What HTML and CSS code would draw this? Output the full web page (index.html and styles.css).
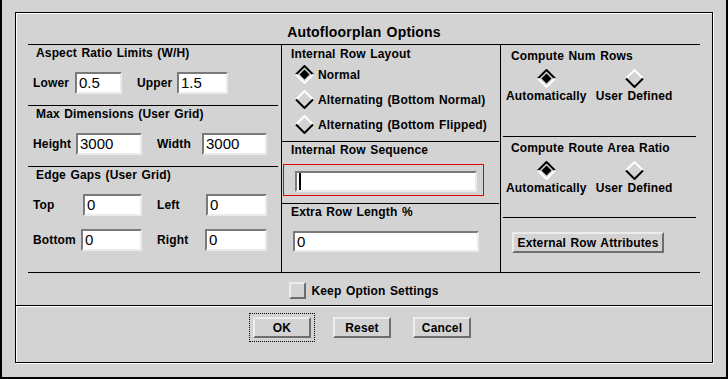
FILE: index.html
```html
<!DOCTYPE html>
<html>
<head>
<meta charset="utf-8">
<title>Autofloorplan Options</title>
<link rel="stylesheet" href="styles.css">
</head>
<body>
<div class="screen">
  <div class="frame">
    <div class="title">Autofloorplan Options</div>
    <div class="main">
      <div class="col col-left">
        <div class="sec sec-la">
          <div class="hd">Aspect Ratio Limits (W/H)</div>
          <div class="row r1">
            <span class="lbl">Lower</span><div class="field">0.5</div>
            <span class="lbl lbl2">Upper</span><div class="field">1.5</div>
          </div>
        </div>
        <div class="sec sec-lb">
          <div class="hd">Max Dimensions (User Grid)</div>
          <div class="row r2">
            <span class="lbl">Height</span><div class="field">3000</div>
            <span class="lbl lbl2">Width</span><div class="field">3000</div>
          </div>
        </div>
        <div class="sec sec-lc">
          <div class="hd">Edge Gaps (User Grid)</div>
          <div class="row r3">
            <span class="lbl">Top</span><div class="field">0</div>
            <span class="lbl lbl2">Left</span><div class="field">0</div>
          </div>
          <div class="row r4">
            <span class="lbl">Bottom</span><div class="field">0</div>
            <span class="lbl lbl2">Right</span><div class="field">0</div>
          </div>
        </div>
      </div>

      <div class="col col-mid">
        <div class="sec sec-ma">
          <div class="hd">Internal Row Layout</div>
          <div class="radios">
            <div class="radio">
              <svg class="dia" viewBox="0 0 19 19" width="19" height="19"><path d="M9.5 4.5L14.5 9.5L9.5 14.5L4.5 9.5Z" fill="#000"/><path d="M1 9.5L9.5 1L18 9.5" fill="none" stroke="#000" stroke-width="2"/><path d="M1 9.5L9.5 18L18 9.5" fill="none" stroke="#fff" stroke-width="2"/></svg>
              <span>Normal</span>
            </div>
            <div class="radio">
              <svg class="dia" viewBox="0 0 19 19" width="19" height="19"><path d="M1 9.5L9.5 1L18 9.5" fill="none" stroke="#fff" stroke-width="2"/><path d="M1 9.5L9.5 18L18 9.5" fill="none" stroke="#000" stroke-width="2"/></svg>
              <span>Alternating (Bottom Normal)</span>
            </div>
            <div class="radio">
              <svg class="dia" viewBox="0 0 19 19" width="19" height="19"><path d="M1 9.5L9.5 1L18 9.5" fill="none" stroke="#fff" stroke-width="2"/><path d="M1 9.5L9.5 18L18 9.5" fill="none" stroke="#000" stroke-width="2"/></svg>
              <span>Alternating (Bottom Flipped)</span>
            </div>
          </div>
        </div>
        <div class="sec sec-mb">
          <div class="hd">Internal Row Sequence</div>
          <div class="focusbox">
            <div class="field seq"><span class="cursor"></span></div>
          </div>
        </div>
        <div class="sec sec-mc">
          <div class="hd">Extra Row Length %</div>
          <div class="field extra">0</div>
        </div>
      </div>

      <div class="col col-right">
        <div class="sec sec-ra">
          <div class="hd">Compute Num Rows</div>
          <div class="opts">
            <div class="opt">
              <svg class="dia" viewBox="0 0 19 19" width="19" height="19"><path d="M9.5 4.5L14.5 9.5L9.5 14.5L4.5 9.5Z" fill="#000"/><path d="M1 9.5L9.5 1L18 9.5" fill="none" stroke="#000" stroke-width="2"/><path d="M1 9.5L9.5 18L18 9.5" fill="none" stroke="#fff" stroke-width="2"/></svg>
              <span>Automatically</span>
            </div>
            <div class="opt">
              <svg class="dia" viewBox="0 0 19 19" width="19" height="19"><path d="M1 9.5L9.5 1L18 9.5" fill="none" stroke="#fff" stroke-width="2"/><path d="M1 9.5L9.5 18L18 9.5" fill="none" stroke="#000" stroke-width="2"/></svg>
              <span>User Defined</span>
            </div>
          </div>
        </div>
        <div class="sec sec-rb">
          <div class="hd">Compute Route Area Ratio</div>
          <div class="opts">
            <div class="opt">
              <svg class="dia" viewBox="0 0 19 19" width="19" height="19"><path d="M9.5 4.5L14.5 9.5L9.5 14.5L4.5 9.5Z" fill="#000"/><path d="M1 9.5L9.5 1L18 9.5" fill="none" stroke="#000" stroke-width="2"/><path d="M1 9.5L9.5 18L18 9.5" fill="none" stroke="#fff" stroke-width="2"/></svg>
              <span>Automatically</span>
            </div>
            <div class="opt">
              <svg class="dia" viewBox="0 0 19 19" width="19" height="19"><path d="M1 9.5L9.5 1L18 9.5" fill="none" stroke="#fff" stroke-width="2"/><path d="M1 9.5L9.5 18L18 9.5" fill="none" stroke="#000" stroke-width="2"/></svg>
              <span>User Defined</span>
            </div>
          </div>
        </div>
        <div class="sec sec-rc">
          <div class="btn ext">External Row Attributes</div>
        </div>
      </div>
    </div>

    <div class="keep">
      <div class="chk"></div>
      <span>Keep Option Settings</span>
    </div>

    <div class="btns">
      <div class="btn focus">OK</div>
      <div class="btn">Reset</div>
      <div class="btn">Cancel</div>
    </div>
  </div>
</div>
</body>
</html>
```

FILE: styles.css
```css
* { box-sizing: border-box; }
html, body { margin: 0; padding: 0; }
body {
  background: #d3d3d3;
  font-family: "Liberation Sans", Arial, sans-serif;
  font-weight: bold;
  font-size: 12px;
  color: #000;
  letter-spacing: 0.15px;
  word-spacing: 1px;
}
.screen {
  width: 728px;
  height: 379px;
  border-left: 2px solid #000;
  border-right: 2px solid #000;
  border-bottom: 2px solid #000;
  padding: 12px 13px 0 13px;
}
.frame {
  width: 698px;
  height: 351px;
  border: 1px solid #000;
  box-shadow: inset 1px 1px 0 #fff, 1px 1px 0 #fff;
  display: flex;
  flex-direction: column;
}
.title {
  height: 31px;
  padding-top: 8px;
  line-height: 23px;
  text-align: center;
  font-size: 14px;
  letter-spacing: 0.2px;
}
.main {
  margin: 0 12px;
  height: 229px;
  border-top: 1px solid #000;
  border-bottom: 1px solid #000;
  display: grid;
  grid-template-columns: 254px 219px 199px;
}
.col { display: flex; flex-direction: column; }
.col-left, .col-mid { border-right: 1px solid #000; }

.hd { height: 14px; line-height: 14px; white-space: nowrap; }
.sec { border-bottom: 1px solid #000; }

/* left column */
.col-left .sec { margin-right: 3px; }
.col-left .hd { margin-top: 1px; padding-left: 8px; }
.sec-la { height: 61px; }
.sec-lb { height: 61px; }
.sec-lc { flex: 1; border-bottom: none; }
.row {
  display: grid;
  align-items: center;
  height: 22px;
  margin-top: 12px;
  padding-left: 5px;
}
.r1 { grid-template-columns: 42px 47px 55px 51px; }
.r2 { grid-template-columns: 43px 66px 60px 65px; }
.r3 { grid-template-columns: 50px 59px 64px 61px; }
.r4 { grid-template-columns: 48px 61px 63px 62px; margin-top: 13px; }
.lbl { line-height: 14px; white-space: nowrap; }
.lbl2 { padding-left: 15px; }

.field {
  background: #fff;
  border: 2px solid;
  border-color: #7a7a7a #ebebeb #ebebeb #7a7a7a;
  height: 22px;
  padding: 0 2px;
  font-weight: normal;
  font-size: 15px;
  line-height: 17px;
  letter-spacing: 0;
  white-space: nowrap;
  overflow: hidden;
}

/* middle column */
.col-mid .sec { margin-right: 1px; }
.col-mid .hd { padding-left: 9px; }
.sec-ma { height: 97px; }
.sec-ma .hd { margin-top: 2px; }
.radios { margin-top: 1px; }
.radio {
  display: flex;
  align-items: center;
  height: 25px;
  padding-left: 13px;
  gap: 4px;
  white-space: nowrap;
}
.dia { display: block; flex: none; }
.sec-mb { height: 62px; }
.sec-mb .hd { margin-top: 1px; }
.focusbox {
  margin: 7px 0 0 1px;
  width: 201px;
  height: 32px;
  border: 1px solid #e00000;
  padding: 6px 6px 0 11px;
}
.field.seq { height: 21px; padding: 0 0 0 2px; }
.cursor {
  display: inline-block;
  width: 2px;
  height: 17px;
  margin-top: 0;
  background: #000;
  vertical-align: top;
}
.sec-mc { flex: 1; border-bottom: none; }
.sec-mc .hd { margin-top: 1px; }
.field.extra { margin: 12px 0 0 11px; width: 186px; height: 21px; }

/* right column */
.col-right .sec { margin: 0 4px 0 2px; }
.col-right .hd { margin-top: 4px; padding-left: 8px; }
.sec-ra { height: 92px; }
.sec-rb { height: 81px; }
.sec-rc { flex: 1; border-bottom: none; }
.opts {
  display: flex;
  gap: 9px;
  margin-top: 6px;
  padding-left: 3px;
}
.opt {
  display: flex;
  flex-direction: column;
  align-items: center;
  white-space: nowrap;
}
.opt span { margin-top: 1px; line-height: 14px; }

.btn {
  width: 58px;
  height: 21px;
  border: 2px solid;
  border-color: #ececec #6e6e6e #6e6e6e #ececec;
  display: flex;
  align-items: center;
  justify-content: center;
  line-height: 14px;
  white-space: nowrap;
}
.btn.ext { width: 152px; margin: 14px 0 0 9px; }
.btn.focus { outline: 1px dotted #000; outline-offset: 3px; }

/* bottom */
.keep {
  height: 32px;
  padding-top: 3px;
  display: flex;
  justify-content: center;
  align-items: center;
  gap: 5px;
  line-height: 14px;
}
.chk {
  width: 17px;
  height: 17px;
  border: 2px solid;
  border-color: #ececec #6e6e6e #6e6e6e #ececec;
}
.btns {
  flex: 1;
  border-top: 1px solid #000;
  box-shadow: inset 0 1px 0 #fff;
  padding: 11px 4px 0 0;
  display: flex;
  justify-content: center;
  align-items: flex-start;
  gap: 22px;
}
```
